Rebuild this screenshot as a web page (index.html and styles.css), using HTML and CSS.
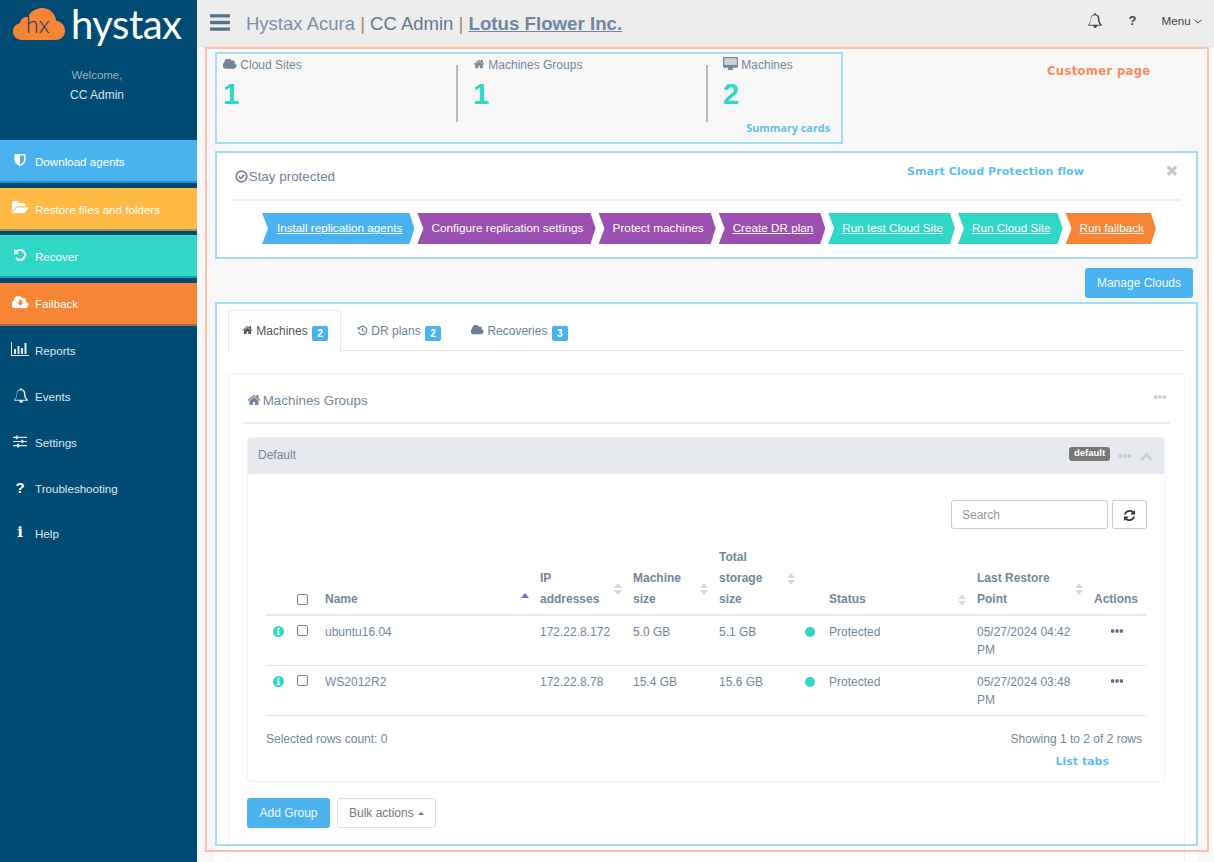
FILE: index.html
```html
<!DOCTYPE html>
<html lang="en">
<head>
  <meta charset="UTF-8" />
  <meta name="viewport" content="width=device-width, initial-scale=1.0" />
  <title>Hystax Acura</title>
  <link rel="stylesheet" href="styles.css">
</head>
<body>

<svg class="sprite" xmlns="http://www.w3.org/2000/svg">
  <symbol id="i-home" viewBox="0 128 1792 1536"><path d="M1472 992v480q0 26-19 45t-45 19h-384v-384h-256v384h-384q-26 0-45-19t-19-45v-480q0-1 .5-3t.5-3l575-474 575 474q1 2 1 6zm223-69l-62 74q-8 9-21 11h-3q-13 0-21-7l-692-577-692 577q-12 8-24 7-13-2-21-11l-62-74q-8-10-7-23.5t11-21.5l719-599q32-26 76-26t76 26l244 204v-195q0-14 9-23t23-9h192q14 0 23 9t9 23v408l219 182q10 8 11 21.5t-7 23.5z"/></symbol>
  <symbol id="i-cloud" viewBox="0 256 1920 1280"><path d="M1856 1152q0 159-112.5 271.5t-271.5 112.5h-1088q-185 0-316.5-131.5t-131.5-316.5q0-132 71-241.5t187-163.5q-2-28-2-43 0-212 150-362t362-150q158 0 286.5 88t187.5 230q70-62 166-62 106 0 181 75t75 181q0 75-41 138 129 30 213 134.5t84 239.5z"/></symbol>
  <symbol id="i-times" viewBox="300 400 1200 1200"><path d="M1490 1322q0 40-28 68l-136 136q-28 28-68 28t-68-28l-294-294-294 294q-28 28-68 28t-68-28l-136-136q-28-28-28-68t28-68l294-294-294-294q-28-28-28-68t28-68l136-136q28-28 68-28t68 28l294 294 294-294q28-28 68-28t68 28l136 136q28 28 28 68t-28 68l-294 294 294 294q28 28 28 68z"/></symbol>
  <symbol id="i-bars" viewBox="128 256 1536 1280"><path d="M1664 1344v128q0 26-19 45t-45 19h-1408q-26 0-45-19t-19-45v-128q0-26 19-45t45-19h1408q26 0 45 19t19 45zm0-512v128q0 26-19 45t-45 19h-1408q-26 0-45-19t-19-45v-128q0-26 19-45t45-19h1408q26 0 45 19t19 45zm0-512v128q0 26-19 45t-45 19h-1408q-26 0-45-19t-19-45v-128q0-26 19-45t45-19h1408q26 0 45 19t19 45z"/></symbol>
  <symbol id="i-dots" viewBox="192 640 1408 384"><path d="M576 736v192q0 40-28 68t-68 28h-192q-40 0-68-28t-28-68v-192q0-40 28-68t68-28h192q40 0 68 28t28 68zm512 0v192q0 40-28 68t-68 28h-192q-40 0-68-28t-28-68v-192q0-40 28-68t68-28h192q40 0 68 28t28 68zm512 0v192q0 40-28 68t-68 28h-192q-40 0-68-28t-28-68v-192q0-40 28-68t68-28h192q40 0 68 28t28 68z"/></symbol>
  <symbol id="i-chevron" viewBox="100 360 1592 1160"><path d="M1683 1331l-166 165q-19 19-45 19t-45-19l-531-531-531 531q-19 19-45 19t-45-19l-166-165q-19-19-19-45.5t19-45.5l742-741q19-19 45-19t45 19l742 741q19 19 19 45.5t-19 45.5z"/></symbol>
  <symbol id="i-undo" viewBox="0 0 1792 1792"><path d="M1664 896q0 156-61 298t-164 245-245 164-298 61q-172 0-327-72.5t-264-204.5q-7-10-6.5-22.5t8.5-20.5l137-138q10-9 25-9 16 2 23 12 73 95 179 147t225 52q104 0 198.5-40.5t163.5-109.5 109.5-163.5 40.5-198.5-40.5-198.5-109.5-163.5-163.5-109.5-198.5-40.5q-98 0-188 35.5t-160 101.5l137 138q31 30 14 69-17 40-59 40h-448q-26 0-45-19t-19-45v-448q0-42 40-59 39-17 69 14l130 129q107-101 244.5-156.5t284.5-55.5q156 0 298 61t245 164 164 245 61 298z"/></symbol>
  <symbol id="i-refresh" viewBox="0 0 1792 1792"><path d="M1639 1056q0 5-1 7-64 268-268 434.5t-478 166.5q-146 0-282.5-55t-243.5-157l-129 129q-19 19-45 19t-45-19-19-45v-448q0-26 19-45t45-19h448q26 0 45 19t19 45-19 45l-137 137q71 66 161 102t187 36q134 0 250-65t186-179q11-17 53-117 8-23 30-23h192q13 0 22.5 9.5t9.5 22.5zm25-800v448q0 26-19 45t-45 19h-448q-26 0-45-19t-19-45 19-45l138-138q-148-137-349-137-134 0-250 65t-186 179q-11 17-53 117-8 23-30 23h-199q-13 0-22.5-9.5t-9.5-22.5v-7q65-268 270-434.5t480-166.5q146 0 284 55.5t245 156.5l130-129q19-19 45-19t45 19 19 45z"/></symbol>
  <symbol id="i-bell" viewBox="0 0 1792 1792"><path d="M912 1696q0-16-16-16-59 0-101.5-42.5t-42.5-101.5q0-16-16-16t-16 16q0 73 51.5 124.5t124.5 51.5q16 0 16-16zm-666-288h1300q-266-300-266-832 0-51-24-105t-69-103-121.5-80.5-169.5-31.5-169.5 31.5-121.5 80.5-69 103-24 105q0 532-266 832zm1546 0q0 52-38 90t-90 38h-448q0 106-75 181t-181 75-181-75-75-181h-448q-52 0-90-38t-38-90q50-42 91-88t85-119.5 74.5-158.5 50-206 19.5-260q0-152 117-282.5t307-158.5q-8-19-8-39 0-40 28-68t68-28 68 28 28 68q0 20-8 39 190 28 307 158.5t117 282.5q0 139 19.5 260t50 206 74.5 158.5 85 119.5 91 88z"/></symbol>
  <symbol id="i-folder" viewBox="0 200 1920 1400"><path d="M1879 952q0 31-31 66l-336 396q-43 51-120.5 86.5t-143.5 35.5h-1088q-34 0-60.5-13t-26.5-43q0-31 31-66l336-396q43-51 120.5-86.5t143.5-35.5h1088q34 0 60.5 13t26.5 43zm-343-344v160h-832q-94 0-197 47.5t-164 119.5l-337 396-5 6q0-4-.5-12.5t-.5-12.5v-960q0-92 66-158t158-66h320q92 0 158 66t66 158v32h544q92 0 158 66t66 158z"/></symbol>
  <symbol id="i-shield" viewBox="0 0 14 16"><path fill-rule="evenodd" d="M1.2 1h11.6c.4 0 .7.3.7.7V8c0 3.4-3.6 6-6.5 7.2C4.1 14 .5 11.4.5 8V1.700c0-.4.3-.7.7-.7zM7 2.700v10.700c2.200-1.100 4.700-3 4.700-5.400V2.700z"/></symbol>
  <symbol id="i-desktop" viewBox="0 0 16 15"><path fill-rule="evenodd" d="M1.200 0h13.600c.7 0 1.200.5 1.200 1.200v9c0 .7-.5 1.200-1.200 1.200h-4.600c0 .8.6 1.300.6 2 0 .3-.2.600-.6.600H5.800c-.4 0-.6-.3-.6-.6 0-.7.6-1.200.6-2H1.200C.5 11.400 0 10.900 0 10.200v-9C0 .5.500 0 1.200 0zM1.300 1.300v7.400h13.400V1.300z"/><rect x="1.300" y="1.300" width="13.400" height="7.400" opacity=".35"/></symbol>
  <symbol id="i-check" viewBox="0 0 14 14"><circle cx="7" cy="7" r="5.700" fill="none" stroke="currentColor" stroke-width="1.800"/><path d="M4.100 7l2.100 2.200 3.700-3.900" fill="none" stroke="currentColor" stroke-width="1.900"/></symbol>
  <symbol id="i-history" viewBox="0 0 14 14"><path d="M2.600 4.200A5.300 5.300 0 1 1 2 8.600" fill="none" stroke="currentColor" stroke-width="1.500"/><path d="M.8 1.800v4h4zM6.400 3.700h1.300v3.200l2 1.300-.7 1L6.400 7.600z"/></symbol>
  <symbol id="i-chart" viewBox="0 0 18 14"><path d="M0 0h1v13h17v1H0zM3 7h2v5H3zM6.500 4h2v8h-2zM10 6h2v6h-2zM13.500 1h2v11h-2z"/></symbol>
  <symbol id="i-sliders" viewBox="0 0 15 13"><path d="M0 1.500h15v1.200H0zM0 5.900h15v1.200H0zM0 10.300h15v1.200H0z"/><path d="M3 0h2v4H3zM9 4.500h2v4H9zM4.500 9h2v4h-2z"/></symbol>
  <symbol id="i-info" viewBox="0 0 12 12"><path fill-rule="evenodd" d="M6 0a6 6 0 1 1 0 12A6 6 0 0 1 6 0zM5 1.800v1.900h2V1.800zM4.200 5v1.200H5v2.400h-.8v1.200h3.600V8.600H7V5z"/></symbol>
</svg>

<aside class="sidebar">
  <div class="brand">
    <svg class="brand-cloud" viewBox="0 0 52 33">
      <path d="M9 32C3.500 32 0 28 0 23.500 0 19 3 16 7 15.300 7.500 11 11 8.500 15 9.200 17.500 3.500 23 0 29 0c7.500 0 13.500 5.500 14 12.500 5 1 9 5 9 10.500 0 5-4 9-9.500 9z"/>
      <text x="13" y="25" class="brand-hx">hx</text>
    </svg>
    <span class="brand-name">hystax</span>
  </div>
  <div class="welcome">
    <div class="welcome-hi">Welcome,</div>
    <div class="welcome-name">CC Admin</div>
  </div>

  <nav class="nav-main">
    <a class="nav-item nav-blue"><span class="nav-icon"><svg class="ic-shield"><use href="#i-shield"/></svg></span>Download agents</a>
    <a class="nav-item nav-yellow"><span class="nav-icon"><svg class="ic-folder"><use href="#i-folder"/></svg></span>Restore files and folders</a>
    <a class="nav-item nav-teal"><span class="nav-icon"><svg class="ic-undo"><use href="#i-undo"/></svg></span>Recover</a>
    <a class="nav-item nav-orange">
      <span class="nav-icon"><svg class="ic-cloud-dl" viewBox="0 0 18 13"><use href="#i-cloud" width="18" height="13"/><path class="cloud-arrow" d="M7.600 3.500h2.800v3h2l-3.400 3.500-3.400-3.500h2z"/></svg></span>Failback
    </a>
  </nav>

  <nav class="nav-sub">
    <a class="nav-item"><span class="nav-icon"><svg class="ic-chart"><use href="#i-chart"/></svg></span>Reports</a>
    <a class="nav-item"><span class="nav-icon"><svg class="ic-bell"><use href="#i-bell"/></svg></span>Events</a>
    <a class="nav-item"><span class="nav-icon"><svg class="ic-sliders"><use href="#i-sliders"/></svg></span>Settings</a>
    <a class="nav-item"><span class="nav-icon nav-glyph">?</span>Troubleshooting</a>
    <a class="nav-item nav-last"><span class="nav-icon nav-glyph nav-glyph-i">i</span>Help</a>
  </nav>
</aside>

<div class="main">
  <header class="topbar">
    <svg class="burger"><use href="#i-bars"/></svg>
    <div class="page-title">
      <span class="t-app">Hystax Acura</span> <span class="t-pipe">|</span> <span class="t-user">CC Admin</span> <span class="t-pipe">|</span> <a class="t-customer">Lotus Flower Inc.</a>
    </div>
    <div class="topbar-right">
      <svg class="top-bell"><use href="#i-bell"/></svg>
      <span class="top-help">?</span>
      <span class="top-menu">Menu <svg class="top-caret" viewBox="0 0 8 5"><path d="M.5.700L4 4.200 7.500.700" fill="none" stroke="currentColor"/></svg></span>
    </div>
  </header>

  <div class="mark-page">
    <span class="note note-customer">Customer page</span>
  </div>

  <section class="summary">
    <div class="stat stat-first">
      <div class="stat-label"><svg class="ic-label-cloud"><use href="#i-cloud"/></svg> Cloud Sites</div>
      <div class="stat-value">1</div>
    </div>
    <div class="stat-sep"></div>
    <div class="stat stat-mid">
      <div class="stat-label"><svg class="ic-label-home"><use href="#i-home"/></svg> Machines Groups</div>
      <div class="stat-value">1</div>
    </div>
    <div class="stat-sep"></div>
    <div class="stat stat-end">
      <div class="stat-label"><svg class="ic-label-desktop"><use href="#i-desktop"/></svg> Machines</div>
      <div class="stat-value">2</div>
    </div>
    <span class="note note-summary">Summary cards</span>
  </section>

  <section class="flow">
    <div class="flow-head">
      <div class="flow-title"><svg class="ic-check"><use href="#i-check"/></svg> Stay protected</div>
      <span class="note note-flow">Smart Cloud Protection flow</span>
      <svg class="flow-close"><use href="#i-times"/></svg>
    </div>
    <div class="steps">
      <a class="step step-blue link">Install replication agents</a>
      <a class="step step-purple">Configure replication settings</a>
      <a class="step step-purple">Protect machines</a>
      <a class="step step-purple link">Create DR plan</a>
      <a class="step step-teal link">Run test Cloud Site</a>
      <a class="step step-teal link">Run Cloud Site</a>
      <a class="step step-orange link">Run failback</a>
    </div>
  </section>

  <div class="actions-row">
    <button class="btn btn-blue">Manage Clouds</button>
  </div>

  <section class="panel">
    <div class="mark-panel"></div>

    <div class="tabs">
      <a class="tab tab-active"><svg class="ic-tab-home"><use href="#i-home"/></svg> Machines <span class="badge">2</span></a>
      <a class="tab"><svg class="ic-tab-history"><use href="#i-history"/></svg> DR plans <span class="badge">2</span></a>
      <a class="tab"><svg class="ic-tab-cloud"><use href="#i-cloud"/></svg> Recoveries <span class="badge">3</span></a>
    </div>

    <div class="group-box">
      <div class="group-box-head">
        <div class="group-box-title"><svg class="ic-heading-home"><use href="#i-home"/></svg> Machines Groups</div>
        <svg class="ic-dots"><use href="#i-dots"/></svg>
      </div>

      <div class="accordion">
        <div class="accordion-head">
          <span class="accordion-name">Default</span>
          <span class="tag">default</span>
          <svg class="ic-dots"><use href="#i-dots"/></svg>
          <svg class="ic-chevron"><use href="#i-chevron"/></svg>
        </div>
        <div class="accordion-body">
          <div class="toolbar">
            <input class="search" type="text" placeholder="Search" />
            <button class="btn-refresh"><svg><use href="#i-refresh"/></svg></button>
          </div>

          <table class="grid">
            <colgroup>
              <col class="c-info"><col class="c-check"><col class="c-name"><col class="c-ip"><col class="c-size">
              <col class="c-total"><col class="c-dot"><col class="c-status"><col class="c-last"><col class="c-actions">
            </colgroup>
            <thead>
              <tr>
                <th></th>
                <th><input class="check" type="checkbox" /></th>
                <th><div class="th-in"><span>Name</span><i class="sort-asc"></i></div></th>
                <th><div class="th-in"><span>IP<br>addresses</span><i class="sort"></i></div></th>
                <th><div class="th-in"><span>Machine<br>size</span><i class="sort"></i></div></th>
                <th><div class="th-in"><span>Total<br>storage<br>size</span><i class="sort"></i></div></th>
                <th></th>
                <th><div class="th-in"><span>Status</span><i class="sort"></i></div></th>
                <th><div class="th-in"><span>Last Restore<br>Point</span><i class="sort"></i></div></th>
                <th>Actions</th>
              </tr>
            </thead>
            <tbody>
              <tr>
                <td class="td-info"><svg class="ic-info"><use href="#i-info"/></svg></td>
                <td><input class="check" type="checkbox" /></td>
                <td>ubuntu16.04</td>
                <td>172.22.8.172</td>
                <td>5.0 GB</td>
                <td>5.1 GB</td>
                <td class="td-dot"><span class="dot"></span></td>
                <td>Protected</td>
                <td>05/27/2024 04:42 PM</td>
                <td class="td-actions"><svg class="ic-row-dots"><use href="#i-dots"/></svg></td>
              </tr>
              <tr>
                <td class="td-info"><svg class="ic-info"><use href="#i-info"/></svg></td>
                <td><input class="check" type="checkbox" /></td>
                <td>WS2012R2</td>
                <td>172.22.8.78</td>
                <td>15.4 GB</td>
                <td>15.6 GB</td>
                <td class="td-dot"><span class="dot"></span></td>
                <td>Protected</td>
                <td>05/27/2024 03:48 PM</td>
                <td class="td-actions"><svg class="ic-row-dots"><use href="#i-dots"/></svg></td>
              </tr>
            </tbody>
          </table>

          <div class="grid-foot">
            <span>Selected rows count: 0</span>
            <span>Showing 1 to 2 of 2 rows</span>
          </div>
          <span class="note note-tabs">List tabs</span>
        </div>
      </div>

      <div class="group-actions">
        <button class="btn btn-blue btn-add">Add Group</button>
        <button class="btn btn-light">Bulk actions <i class="caret-up"></i></button>
      </div>
    </div>
  </section>
</div>

</body>
</html>
```

FILE: styles.css
```css
* { box-sizing: border-box; }

html, body {
  margin: 0;
  height: 100%;
  overflow: hidden;
}

body {
  display: flex;
  font-family: "Liberation Sans", Arial, sans-serif;
  font-size: 12px;
  color: #73879c;
  background: #f7f7f7;
}

svg { fill: currentColor; display: inline-block; }

.sprite { display: none; }

/* Sidebar */
.sidebar {
  flex: none;
  width: 197px;
  height: 100vh;
  background: #004b73;
  color: #e2eaef;
}

.brand {
  display: flex;
  align-items: flex-start;
  height: 60px;
  padding: 8px 0 0 13px;
}

.brand-cloud {
  width: 52px;
  height: 33px;
  fill: #f78536;
}

.brand-hx {
  font-family: "Lato", sans-serif;
  font-size: 23px;
  font-weight: 300;
  fill: #0b3f60;
}

.brand-name {
  margin: -8px 0 0 6px;
  font-family: "Lato", sans-serif;
  font-weight: 400;
  font-size: 40px;
  line-height: 48px;
  letter-spacing: -.5px;
  color: #fff;
}

.welcome {
  height: 80px;
  text-align: center;
  padding: 6px 3px 0 0;
}

.welcome-hi {
  line-height: 18px;
  font-size: 11.5px;
  color: #9db3c1;
}

.welcome-name {
  margin-top: 2px;
  line-height: 18px;
  color: #d9e3e9;
}

.nav-item {
  display: flex;
  align-items: center;
  height: 46px;
  font-size: 11.6px;
  color: #dfe8ed;
}

.nav-last { height: 44px; }

.nav-icon {
  flex: none;
  display: flex;
  justify-content: center;
  align-items: center;
  width: 22px;
  margin: -3px 4px 0 9px;
}

.nav-main .nav-item {
  height: 43px;
  margin-bottom: 4.67px;
  padding-top: 2px;
  color: #fff;
  border-bottom: 2px solid rgba(0, 75, 115, .35);
}

.nav-main .nav-orange { padding-top: 1px; }

.nav-main { margin-bottom: -2.7px; }

.nav-blue { background: #4ab3ef; }
.nav-yellow { background: #ffb945; }
.nav-teal { background: #30d6c6; }
.nav-orange { background: #f78536; }

.ic-shield { width: 12px; height: 14px; }
.ic-folder { width: 17px; height: 13px; }
.ic-undo { width: 14px; height: 14px; }
.ic-cloud-dl { width: 17px; height: 13px; fill: #fff; }
.cloud-arrow { fill: #f78536; }
.ic-chart { width: 18px; height: 14px; margin-left: -1px; }
.ic-bell { width: 15px; height: 15px; }
.ic-sliders { width: 14px; height: 13px; }

.nav-glyph {
  font-weight: bold;
  font-size: 15px;
  color: #fff;
}

.nav-glyph-i {
  font-family: "DejaVu Serif", serif;
  font-size: 15px;
}

/* Main column */
.main {
  position: relative;
  flex: 1;
  min-width: 0;
  height: 100vh;
  overflow: hidden;
}

.topbar {
  display: flex;
  align-items: center;
  height: 47px;
  padding-left: 13px;
  background: #ededed;
  border-bottom: 1px solid #e6e6e6;
}

.burger {
  width: 20px;
  height: 17px;
  margin: -1px 16px 0 0;
  color: #54708f;
}

.page-title {
  margin-top: 1px;
  font-size: 18.5px;
  white-space: nowrap;
  color: #73879c;
}

.t-app { color: #7a90a8; }
.t-user { color: #5f7890; }
.t-pipe { color: #a8846c; }
.t-customer {
  font-size: 18.7px;
  font-weight: bold;
  text-decoration: underline;
  color: #6f86a0;
}

.topbar-right {
  display: flex;
  align-items: center;
  margin-left: auto;
  padding: 0 12px 5px 0;
  color: #444;
}

.top-bell { width: 15px; height: 15px; margin-right: 27px; }
.top-help { font-weight: bold; font-size: 13px; margin-right: 25px; }
.top-menu { font-size: 11.7px; }
.top-caret { width: 8px; height: 5px; vertical-align: 1px; }

/* Annotation marks over the page */
.mark-page {
  position: absolute;
  left: 8px;
  top: 47px;
  width: 1004px;
  height: 805px;
  border: 2px solid #ffbfa8;
  pointer-events: none;
  z-index: 5;
}

.mark-panel {
  position: absolute;
  left: 0;
  right: 0;
  top: 0;
  height: 544px;
  border: 2px solid #a3dcf3;
  pointer-events: none;
}

.note {
  position: absolute;
  font-family: "DejaVu Sans", sans-serif;
  font-weight: bold;
  font-size: 11px;
  line-height: 14px;
  white-space: nowrap;
  color: #5fc0ef;
}

.note-customer {
  left: 840px;
  top: 15px;
  font-size: 11.5px;
  letter-spacing: .4px;
  color: #ff8a5c;
}

.note-summary {
  right: 11px;
  bottom: 7px;
  font-family: "Open Sans", sans-serif;
  font-size: 10.8px;
}

.note-flow {
  left: 677px;
  top: 12px;
  letter-spacing: .07px;
}

.note-tabs {
  right: 55px;
  bottom: 12px;
}

/* Summary cards */
.summary {
  position: relative;
  display: flex;
  width: 628px;
  height: 92px;
  margin: 5px 0 0 18px;
  border: 2px solid #a3dcf3;
}

.stat { flex: none; }
.stat-first { width: 239px; padding-left: 6px; }
.stat-mid { width: 248px; padding-left: 15px; }
.stat-end { padding-left: 15px; }

.stat-label {
  margin-top: 3px;
  line-height: 16px;
  white-space: nowrap;
}

.stat-value {
  margin-top: 2px;
  font-size: 29px;
  font-weight: bold;
  line-height: 38px;
  color: #30d6c6;
}

.stat-sep {
  flex: none;
  width: 2px;
  height: 57px;
  margin-top: 11px;
  background: #b5bcc2;
}

.ic-label-cloud { width: 14px; height: 10px; }
.ic-label-home { width: 12px; height: 10px; }
.ic-label-desktop { width: 15px; height: 14px; vertical-align: -2px; }

/* Protection flow */
.flow {
  height: 108px;
  margin: 7px 16px 0 18px;
  padding: 0 15px;
  background: #fff;
  border: 2px solid #a3dcf3;
}

.flow-head {
  position: relative;
  display: flex;
  align-items: center;
  justify-content: space-between;
  height: 48px;
  margin: 0 0 12px -2px;
  border-bottom: 2px solid #eeeef3;
}

.flow-title {
  font-size: 13.4px;
  color: #6f829a;
  padding-left: 5px;
}

.ic-check { width: 13px; height: 13px; margin-right: -3px; vertical-align: -2px; }

.flow-close {
  width: 10px;
  height: 10px;
  margin: -10px 4px 0 0;
  color: #c8c8c8;
}

.steps {
  display: flex;
  gap: 3px;
  padding-left: 30px;
}

.step {
  flex: none;
  display: block;
  height: 31px;
  padding: 0 12px 0 14px;
  font-size: 11.8px;
  line-height: 30px;
  white-space: nowrap;
  color: #fff;
  clip-path: polygon(0 0, calc(100% - 5px) 0, 100% 50%, calc(100% - 5px) 100%, 0 100%, 6px 50%);
}

.step:first-child { padding-left: 15px; }
.step.link { font-size: 11.7px; text-decoration: underline; }
.step-blue { background: #4ab3ef; }
.step-purple { background: #9b4fae; }
.step-teal { background: #30d6c6; }
.step-orange { background: #f78536; }

.actions-row {
  display: flex;
  justify-content: flex-end;
  margin: 9px 21px 0 0;
}

/* Buttons */
.btn {
  height: 29.5px;
  padding: 0 11px;
  font-family: inherit;
  font-size: 12px;
  border-radius: 3px;
  border: 1px solid transparent;
}

.btn-add { width: 83px; padding: 0; }

.btn-blue {
  background: #4ab3ef;
  color: #f1f9fe;
}

.btn-light {
  background: #fff;
  border-color: #ddd;
  color: #777;
}

.caret-up {
  display: inline-block;
  width: 0;
  height: 0;
  margin-left: 1px;
  vertical-align: 2px;
  border-left: 3px solid transparent;
  border-right: 3px solid transparent;
  border-bottom: 3px solid #777;
}

/* Tabs panel */
.panel {
  position: relative;
  margin: 4.5px 16px 0 18px;
  padding: 8px 13px 0;
  background: #fff;
}

.tabs {
  display: flex;
  gap: 2px;
  height: 41px;
  border-bottom: 1px solid #e6e6e6;
}

.tab {
  display: block;
  height: 41px;
  padding: 12px 13px 0 13px;
  white-space: nowrap;
  line-height: 16px;
  border: 1px solid transparent;
  border-bottom: 0;
  border-radius: 3px 3px 0 0;
  color: #6d8098;
}

.tab-active {
  height: 42px;
  padding-left: 13px;
  padding-right: 12px;
  background: #fff;
  border-color: #e8e8e8;
  color: #555;
}

.ic-tab-home { width: 11px; height: 10px; }
.ic-tab-history { width: 11px; height: 11px; vertical-align: -1px; }
.ic-tab-cloud { width: 13px; height: 10px; }

.badge {
  display: inline-block;
  width: 16px;
  height: 15px;
  margin-left: 1px;
  vertical-align: -2px;
  text-align: center;
  font-size: 10px;
  font-weight: bold;
  line-height: 15px;
  border-radius: 2px;
  background: #4ab3ef;
  color: #fff;
}

.group-box {
  margin-top: 22px;
  padding: 0 14px 80px;
  border: 1px solid #f2f2f2;
}

.group-box-head {
  display: flex;
  align-items: center;
  justify-content: space-between;
  height: 50px;
  padding-top: 5px;
  border-bottom: 2px solid #eeeef3;
}

.group-box-title { font-size: 13.4px; padding-left: 4px; }
.ic-heading-home { width: 14px; height: 12px; margin-right: -2px; vertical-align: -1px; }

.ic-dots {
  width: 12px;
  height: 4px;
  color: #c8cacd;
}

.group-box-head .ic-dots { margin: -8px 4px 0 0; }

.accordion {
  margin: 13px 5px 0 4px;
  border: 1px solid #f2f2f2;
  border-radius: 3px;
}

.accordion-head {
  display: flex;
  align-items: center;
  height: 36px;
  padding: 0 11px 0 10px;
  background: #e6e9ed;
  border-radius: 3px 3px 0 0;
}

.accordion-name { margin-right: auto; margin-top: -2px; }

.tag {
  width: 41px;
  height: 14px;
  margin: -4px 9px 0 0;
  text-align: center;
  font-size: 9.5px;
  font-weight: bold;
  line-height: 12px;
  border-radius: 3px;
  background: #777;
  color: #fff;
}

.ic-chevron {
  width: 13px;
  height: 9px;
  margin-left: 9px;
  color: #d0d2d6;
}

.accordion-body {
  position: relative;
  height: 307px;
  padding: 26px 17px 0 18px;
}

.toolbar {
  display: flex;
  justify-content: flex-end;
  gap: 4px;
}

.search {
  width: 157px;
  height: 29px;
  padding: 0 10px;
  font-family: inherit;
  font-size: 12px;
  color: #555;
  background: #fff;
  border: 1px solid #ccc;
  border-radius: 3px;
}

.search::placeholder { color: #999; }

.btn-refresh {
  width: 35px;
  height: 29px;
  padding: 0;
  color: #333;
  background: #fff;
  border: 1px solid #ccc;
  border-radius: 3px;
}

.btn-refresh svg { width: 13px; height: 13px; vertical-align: middle; }

/* Table */
.grid {
  width: 881px;
  margin-top: 18px;
  border-collapse: collapse;
  table-layout: fixed;
}

.c-info { width: 24px; }
.c-check { width: 27px; }
.c-name { width: 215px; }
.c-ip { width: 93px; }
.c-size { width: 86px; }
.c-total { width: 87px; }
.c-dot { width: 23px; }
.c-status { width: 148px; }
.c-last { width: 117px; }
.c-actions { width: 61px; }

.grid th {
  padding: 0 3px 4px 8px;
  text-align: left;
  vertical-align: bottom;
  font-weight: bold;
  line-height: 21px;
  border-bottom: 2px solid #e9e9e9;
}

.th-in {
  display: flex;
  align-items: center;
  justify-content: space-between;
}

.grid th:nth-child(2), .grid td:nth-child(2) { padding-left: 7px; padding-right: 0; }
.grid th:last-child { padding-right: 0; }

.sort, .sort-asc {
  position: relative;
  flex: none;
  width: 8px;
  height: 12px;
}

.sort::before, .sort::after, .sort-asc::before {
  content: "";
  position: absolute;
  left: 0;
  border-left: 4px solid transparent;
  border-right: 4px solid transparent;
}

.sort::before { top: 0; border-bottom: 5px solid #d9d9d9; }
.sort::after { bottom: 0; border-top: 5px solid #d9d9d9; }
.sort-asc::before { top: -1px; border-bottom: 5px solid #6a6fe0; }

.grid td {
  height: 50px;
  padding: 7px 8px 6px;
  vertical-align: top;
  line-height: 18px;
  border-bottom: 1px solid #e3e3e3;
}

.check {
  appearance: none;
  display: block;
  width: 11px;
  height: 11px;
  margin: 0 0 5px;
  background: #fff;
  border: 1.5px solid #73879c;
  border-radius: 2px;
}

.grid td .check { margin-top: 2px; }

.grid td.td-info { padding: 10px 0 0 7px; }
.ic-info { display: block; width: 11px; height: 11px; color: #30d6c6; }

.grid td.td-dot { padding: 11px 0 0 7px; }

.dot {
  display: block;
  width: 10px;
  height: 10px;
  border-radius: 50%;
  background: #30d6c6;
}

.grid td.td-actions { text-align: center; padding: 13px 0 0 0; }
.ic-row-dots { display: block; width: 12px; height: 4px; margin: 0 auto; color: #5f7189; }

.grid-foot {
  display: flex;
  justify-content: space-between;
  margin-top: 14px;
  padding-right: 5px;
  line-height: 18px;
}

.group-actions {
  display: flex;
  gap: 7px;
  margin: 16px 0 0 4px;
}
```
